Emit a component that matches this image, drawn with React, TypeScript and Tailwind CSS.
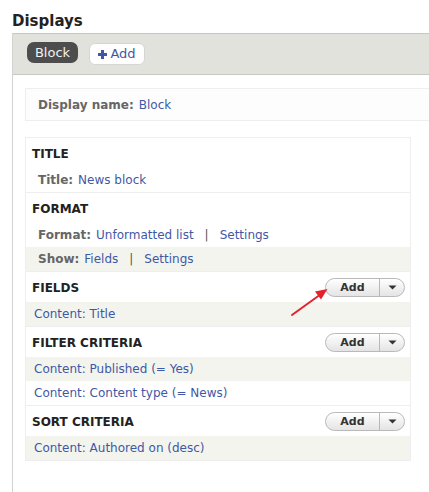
import React from "react";

const linkCls = "text-[#3f58a6]";

function AddDropButton() {
  return (
    <div className="flex h-[19px] w-[80px] items-stretch rounded-full border border-[#b9b9b9] bg-gradient-to-b from-white to-[#e4e4e4] text-[11px] leading-[17px]">
      <span className="flex w-[53px] items-center justify-center font-bold text-[#333]">Add</span>
      <span className="flex flex-1 items-center justify-center border-l border-[#b9b9b9]">
        <svg width="9" height="5" viewBox="0 0 9 5">
          <path d="M0.5 0.5 L8.5 0.5 L4.5 4.5 Z" fill="#333" />
        </svg>
      </span>
    </div>
  );
}

function Heading({ text, action }: { text: string; action?: boolean }) {
  return (
    <div className="flex h-[30px] items-center justify-between pl-[6px] pr-[5px]">
      <span className="pt-[2px] text-[12px] font-bold leading-[16px] text-[#222]">{text}</span>
      {action && <AddDropButton />}
    </div>
  );
}

function Row({ children, striped, pad = "pl-3" }: { children: React.ReactNode; striped?: boolean; pad?: string }) {
  return (
    <div className={`flex h-[24px] items-center text-[12px] leading-[16px] ${pad} ${striped ? "bg-[#f3f4ee]" : "bg-white"}`}>
      {children}
    </div>
  );
}

function Label({ children }: { children: React.ReactNode }) {
  return <span className="mr-[5px] font-bold text-[#666]">{children}</span>;
}

function Sep() {
  return <span className="mx-[11px] text-[#555]">|</span>;
}

export default function App() {
  return (
    <div className="relative h-[492px] w-[429px] overflow-hidden bg-white font-['DejaVu_Sans',sans-serif]">
      <h2 className="mb-[3px] pl-3 pt-[12px] text-[15px] font-bold leading-[18px] text-[#222]">Displays</h2>

      <div className="ml-3 min-h-[460px] w-[470px] border-l border-[#d2d2d2]">
        {/* display tabs */}
        <div className="flex h-[42px] items-start gap-[11px] border-y border-[#c6c7c0] bg-[#e1e2dc] pl-[14px] pt-[8px]">
          <span className="flex h-[21px] w-[51px] items-center justify-center rounded-[7px] bg-[#4d4d4d] text-[13px] text-[#f2f2f2]">
            Block
          </span>
          <span className="mt-[1px] flex h-[22px] w-[56px] items-center justify-center gap-[3px] rounded-[6px] border border-[#d6d6d6] bg-white text-[13px] text-[#3f58a6]">
            <svg width="9" height="9" viewBox="0 0 9 9">
              <path d="M3 0 H6 V3 H9 V6 H6 V9 H3 V6 H0 V3 H3 Z" fill="#3f58a6" />
            </svg>
            Add
          </span>
        </div>

        <div className="pl-[12px] pt-[13px]">
          {/* display name */}
          <div className="flex h-[33px] items-center border border-[#eeeeee] bg-[#fdfdfd] pl-3 text-[12px]">
            <Label>Display name:</Label>
            <span className={linkCls}>Block</span>
          </div>

          {/* settings column */}
          <div className="mt-[16px] w-[386px] border border-[#eeeeee]">
            <div className="border-b border-[#eeeeee]">
              <Heading text="TITLE" />
              <Row>
                <Label>Title:</Label>
                <span className={linkCls}>News block</span>
              </Row>
            </div>

            <div className="border-b border-[#eeeeee]">
              <Heading text="FORMAT" />
              <Row>
                <Label>Format:</Label>
                <span className={linkCls}>Unformatted list</span>
                <Sep />
                <span className={linkCls}>Settings</span>
              </Row>
              <Row striped>
                <Label>Show:</Label>
                <span className={linkCls}>Fields</span>
                <Sep />
                <span className={linkCls}>Settings</span>
              </Row>
            </div>

            <div className="border-b border-[#eeeeee]">
              <Heading text="FIELDS" action />
              <Row striped pad="pl-[8px]">
                <span className={linkCls}>Content: Title</span>
              </Row>
            </div>

            <div className="border-b border-[#eeeeee]">
              <Heading text="FILTER CRITERIA" action />
              <Row striped pad="pl-[8px]">
                <span className={linkCls}>Content: Published (= Yes)</span>
              </Row>
              <Row pad="pl-[8px]">
                <span className={linkCls}>Content: Content type (= News)</span>
              </Row>
            </div>

            <div>
              <Heading text="SORT CRITERIA" action />
              <Row striped pad="pl-[8px]">
                <span className={linkCls}>Content: Authored on (desc)</span>
              </Row>
            </div>
          </div>
        </div>
      </div>

      {/* pointer arrow */}
      <svg className="pointer-events-none absolute left-0 top-0" width="429" height="492" viewBox="0 0 429 492">
        <line x1="292" y1="315" x2="319" y2="295.5" stroke="#e3222b" strokeWidth="2" strokeLinecap="round" />
        <path d="M327.5 289 L321 299.5 L315 291.5 Z" fill="#e3222b" />
      </svg>
    </div>
  );
}
